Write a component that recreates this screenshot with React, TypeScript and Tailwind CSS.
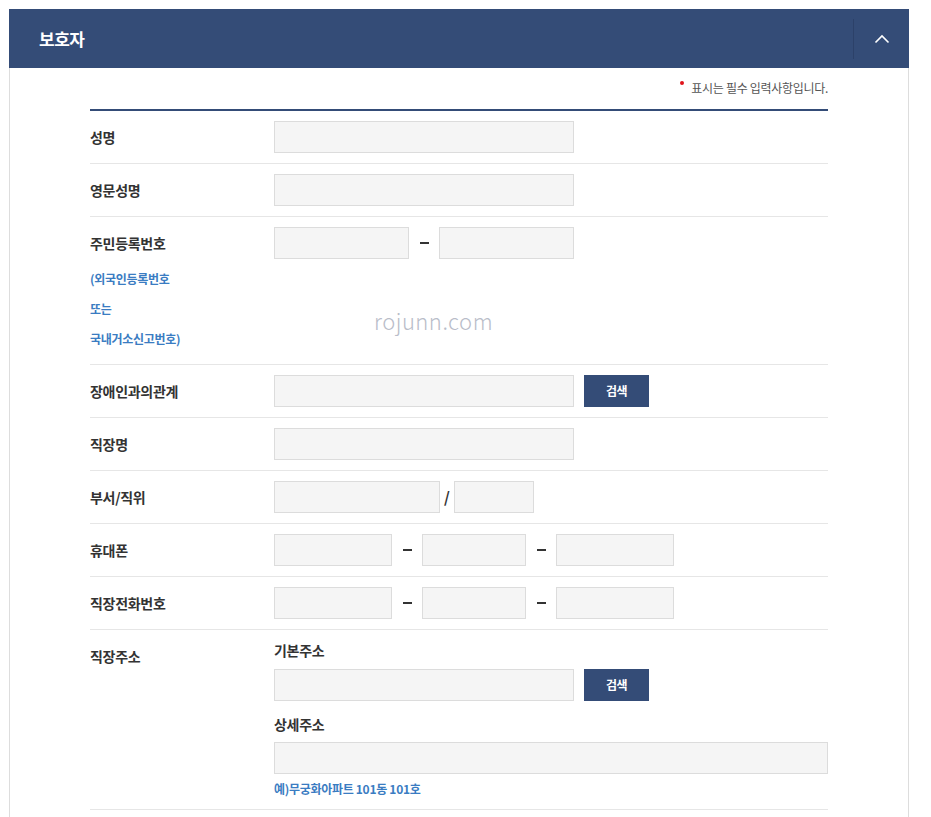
import { ReactNode } from "react";

const font = { fontFamily: '"Noto Sans CJK KR", "Noto Sans", sans-serif' };

function Field({ w }: { w: string }) {
  return (
    <input
      type="text"
      className={`${w} h-[32px] bg-[#f5f5f5] border border-[#dcdcdc] outline-none`}
    />
  );
}

function Dash() {
  return (
    <span className="w-[30px] flex justify-center">
      <span className="block w-[9px] h-[2px] bg-[#333]" />
    </span>
  );
}

function SearchButton() {
  return (
    <button className="ml-[10px] w-[65px] h-[32px] bg-[#344c77] text-white text-[12px] font-bold tracking-[-0.5px]">
      검색
    </button>
  );
}

function Row({ label, children }: { label: ReactNode; children: ReactNode }) {
  return (
    <div className="flex py-[10px] border-b border-[#e6e6e6]">
      <div className="w-[184px] shrink-0">{label}</div>
      <div className="flex-1">{children}</div>
    </div>
  );
}

function Label({ text }: { text: string }) {
  return (
    <div className="h-[32px] flex items-center text-[14px] font-bold text-[#333] tracking-[-0.3px]">
      {text}
    </div>
  );
}

export default function App() {
  return (
    <div className="min-h-screen bg-white pt-[9px] pl-[9px]" style={font}>
      <div className="w-[900px]">
        {/* header bar */}
        <div className="h-[59px] bg-[#344c77] flex items-center justify-between">
          <h2 className="pl-[30px] text-[17px] font-bold text-white tracking-[-0.5px]">
            보호자
          </h2>
          <div className="w-[56px] h-[40px] border-l border-[#2c4169] flex items-center justify-center">
            <svg width="16" height="10" viewBox="0 0 16 10" fill="none">
              <path d="M1.5 8.5 L8 2 L14.5 8.5" stroke="white" strokeWidth="1.6" />
            </svg>
          </div>
        </div>

        <div className="relative border-x border-[#dddddd] px-[80px] pb-[10px]">
          <div className="pt-[11px] h-[29px] flex justify-end items-center text-[12px] text-[#555] tracking-[-0.3px]">
            <span className="inline-block w-[4px] h-[4px] rounded-full bg-[#e0131b] mr-[7px] relative -top-[5px]" />
            표시는 필수 입력사항입니다.
          </div>
          <div className="mt-[12px] h-[2px] bg-[#344c77]" />

          <Row label={<Label text="성명" />}>
            <Field w="w-[300px]" />
          </Row>

          <Row label={<Label text="영문성명" />}>
            <Field w="w-[300px]" />
          </Row>

          <Row
            label={
              <div>
                <Label text="주민등록번호" />
                <div className="text-[12px] font-bold text-[#3a7cc2] tracking-[-0.3px] leading-[30px] pt-[5px]">
                  <p>(외국인등록번호</p>
                  <p>또는</p>
                  <p>국내거소신고번호)</p>
                </div>
              </div>
            }
          >
            <div className="flex items-center">
              <Field w="w-[135px]" />
              <Dash />
              <Field w="w-[135px]" />
            </div>
          </Row>

          <Row label={<Label text="장애인과의관계" />}>
            <div className="flex items-center">
              <Field w="w-[300px]" />
              <SearchButton />
            </div>
          </Row>

          <Row label={<Label text="직장명" />}>
            <Field w="w-[300px]" />
          </Row>

          <Row label={<Label text="부서/직위" />}>
            <div className="flex items-center">
              <Field w="w-[166px]" />
              <span className="w-[14px] text-center text-[15px] font-bold text-[#333]">/</span>
              <Field w="w-[80px]" />
            </div>
          </Row>

          <Row label={<Label text="휴대폰" />}>
            <div className="flex items-center">
              <Field w="w-[118px]" />
              <Dash />
              <Field w="w-[104px]" />
              <Dash />
              <Field w="w-[118px]" />
            </div>
          </Row>

          <Row label={<Label text="직장전화번호" />}>
            <div className="flex items-center">
              <Field w="w-[118px]" />
              <Dash />
              <Field w="w-[104px]" />
              <Dash />
              <Field w="w-[118px]" />
            </div>
          </Row>

          <Row label={<Label text="직장주소" />}>
            <div className="flex flex-col">
              <div className="h-[20px] flex items-center text-[14px] font-bold text-[#333] tracking-[-0.3px]">
                기본주소
              </div>
              <div className="mt-[9px] flex items-center">
                <Field w="w-[300px]" />
                <SearchButton />
              </div>
              <div className="mt-[13px] h-[20px] flex items-center text-[14px] font-bold text-[#333] tracking-[-0.3px]">
                상세주소
              </div>
              <div className="mt-[8px]">
                <Field w="w-full" />
              </div>
              <div className="mt-[5px] h-[20px] flex items-center text-[12px] font-bold text-[#3a7cc2] tracking-[-0.3px]">
                예)무궁화아파트 101동 101호
              </div>
            </div>
          </Row>

          <div className="absolute left-[364px] top-[236px] text-[22px] font-light text-[#b9bdc9] tracking-[0.5px] pointer-events-none">
            rojunn.com
          </div>
        </div>
      </div>
    </div>
  );
}
